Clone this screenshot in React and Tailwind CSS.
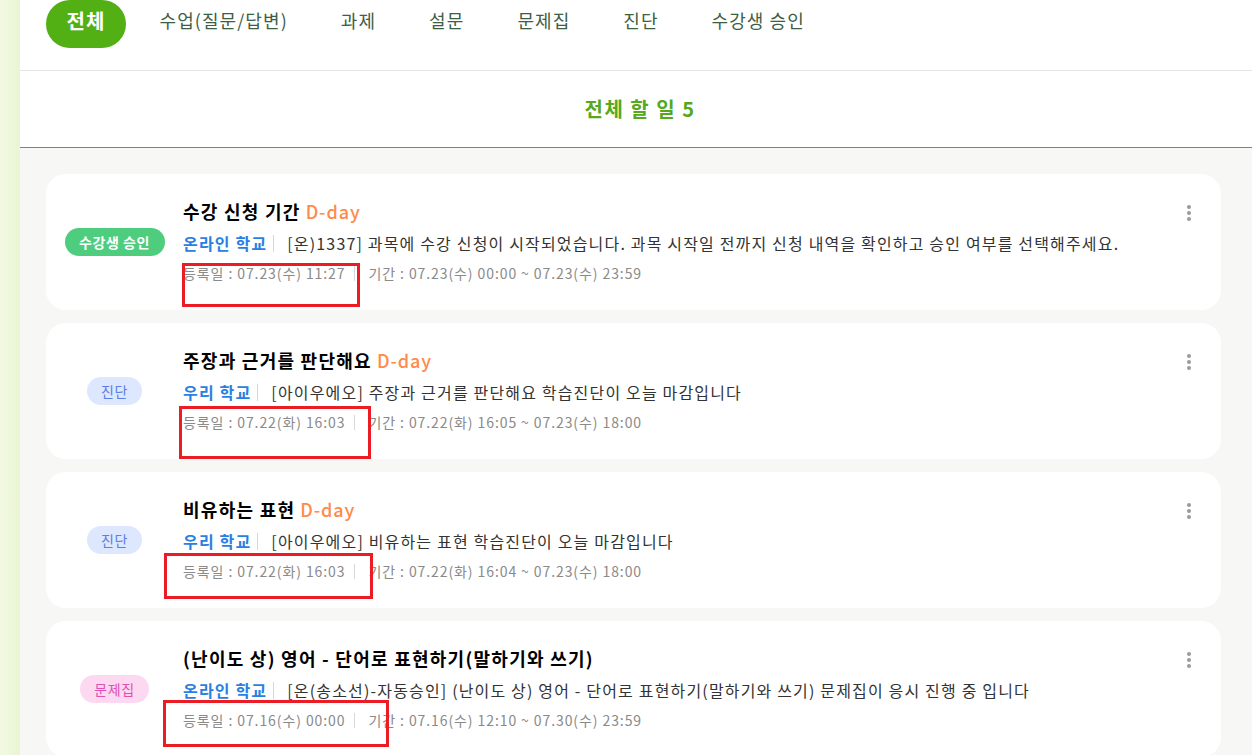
const tabs = ['수업(질문/답변)', '과제', '설문', '문제집', '진단', '수강생 승인'];

const todos = [
  {
    badge: '수강생 승인',
    badgeCls: 'bg-[#4fcd7e] text-white font-bold w-[100px]',
    title: '수강 신청 기간',
    dday: true,
    school: '온라인 학교',
    text: '[온)1337] 과목에 수강 신청이 시작되었습니다. 과목 시작일 전까지 신청 내역을 확인하고 승인 여부를 선택해주세요.',
    reg: '등록일 : 07.23(수) 11:27',
    period: '기간 : 07.23(수) 00:00 ~ 07.23(수) 23:59',
    box: 'left-[136px] top-[89px] w-[178px] h-[44px]',
  },
  {
    badge: '진단',
    badgeCls: 'bg-[#dde7fe] text-[#5a7fe6] w-[55px]',
    title: '주장과 근거를 판단해요',
    dday: true,
    school: '우리 학교',
    text: '[아이우에오] 주장과 근거를 판단해요 학습진단이 오늘 마감입니다',
    reg: '등록일 : 07.22(화) 16:03',
    period: '기간 : 07.22(화) 16:05 ~ 07.23(수) 18:00',
    box: 'left-[133px] top-[83px] w-[192px] h-[53px]',
  },
  {
    badge: '진단',
    badgeCls: 'bg-[#dde7fe] text-[#5a7fe6] w-[55px]',
    title: '비유하는 표현',
    dday: true,
    school: '우리 학교',
    text: '[아이우에오] 비유하는 표현 학습진단이 오늘 마감입니다',
    reg: '등록일 : 07.22(화) 16:03',
    period: '기간 : 07.22(화) 16:04 ~ 07.23(수) 18:00',
    box: 'left-[118px] top-[81px] w-[209px] h-[46px]',
  },
  {
    badge: '문제집',
    badgeCls: 'bg-[#fcd9f1] text-[#e04fb3] w-[69px]',
    title: '(난이도 상) 영어 - 단어로 표현하기(말하기와 쓰기)',
    dday: false,
    school: '온라인 학교',
    text: '[온(송소선)-자동승인] (난이도 상) 영어 - 단어로 표현하기(말하기와 쓰기) 문제집이 응시 진행 중 입니다',
    reg: '등록일 : 07.16(수) 00:00',
    period: '기간 : 07.16(수) 12:10 ~ 07.30(수) 23:59',
    box: 'left-[117px] top-[79px] w-[226px] h-[47px]',
  },
];

function Kebab() {
  return (
    <svg width="6" height="18" viewBox="0 0 6 18">
      <circle cx="3" cy="3" r="2" fill="#9a9a9a" />
      <circle cx="3" cy="9" r="2" fill="#9a9a9a" />
      <circle cx="3" cy="15" r="2" fill="#9a9a9a" />
    </svg>
  );
}

function TodoCard({ t }) {
  return (
    <div className="relative flex bg-white rounded-[20px] h-[136px]">
      <div className="w-[137px] shrink-0 flex items-center justify-center">
        <span className={`h-[28px] rounded-full flex items-center justify-center text-[14px] tracking-[0.04em] ${t.badgeCls}`}>
          {t.badge}
        </span>
      </div>
      <div className="flex-1 pt-[24px] min-w-0">
        <div className="h-[26px] leading-[26px] text-[18px] font-bold text-black whitespace-nowrap tracking-[0.07em]">
          {t.title}
          {t.dday && <span className="ml-[5px] font-medium text-[#ff8a4a] tracking-[0.05em]">D-day</span>}
        </div>
        <div className="mt-[6px] h-[26px] leading-[26px] text-[16px] flex items-center whitespace-nowrap tracking-[0.073em]">
          <span className="font-bold text-[#2a7fe2]">{t.school}</span>
          <span className="ml-[6px] mr-[13px] w-px h-[17px] bg-[#d6d6d6]" />
          <span className="text-[#333]">{t.text}</span>
        </div>
        <div className="mt-[6px] h-[22px] leading-[22px] text-[14px] text-[#8a8a8a] flex items-center whitespace-nowrap tracking-[0.065em]">
          <span>{t.reg}</span>
          <span className="ml-[9px] mr-[13px] w-px h-[15px] bg-[#d8d8d8]" />
          <span>{t.period}</span>
        </div>
      </div>
      <div className="w-[64px] shrink-0 flex justify-center pt-[30px]">
        <Kebab />
      </div>
      <div className={`absolute border-[3px] border-[#ec1c24] pointer-events-none ${t.box}`} />
    </div>
  );
}

export default function App() {
  return (
    <div
      className="flex w-[1252px] h-[755px] overflow-hidden bg-white"
      style={{ fontFamily: '"Noto Sans CJK KR", "Noto Sans", sans-serif' }}
    >
      <div className="w-[20px] shrink-0 bg-gradient-to-r from-[#f3f9e2] to-[#e9f5d4]" />
      <div className="flex-1 flex flex-col min-w-0">
        {/* 탭 */}
        <div className="h-[71px] shrink-0 border-b border-[#e6e6e6] flex items-start pl-[26px]">
          <div className="h-[48px] w-[80px] rounded-full bg-[#52b014] text-white text-[20px] font-bold flex items-center justify-center pb-[6px] tracking-[0.05em]">
            전체
          </div>
          <div className="flex ml-[7px]">
            {tabs.map((tab) => (
              <div key={tab} className="px-[26.5px] h-[40px] flex items-center text-[18px] text-[#3d6045] whitespace-nowrap tracking-[0.06em]">
                {tab}
              </div>
            ))}
          </div>
        </div>

        {/* 제목 */}
        <div className="h-[77px] shrink-0 border-b border-[#58a82a] flex items-center justify-center">
          <h1 className="text-[20px] font-bold text-[#56a91c] pl-[8px] tracking-[0.075em]">전체 할 일 5</h1>
        </div>

        {/* 목록 */}
        <div className="flex-1 bg-[#f7f8f6] pt-[26px] pl-[26px] pr-[31px] flex flex-col gap-[13px]">
          {todos.map((t, i) => (
            <TodoCard key={i} t={t} />
          ))}
        </div>
      </div>
    </div>
  );
}
